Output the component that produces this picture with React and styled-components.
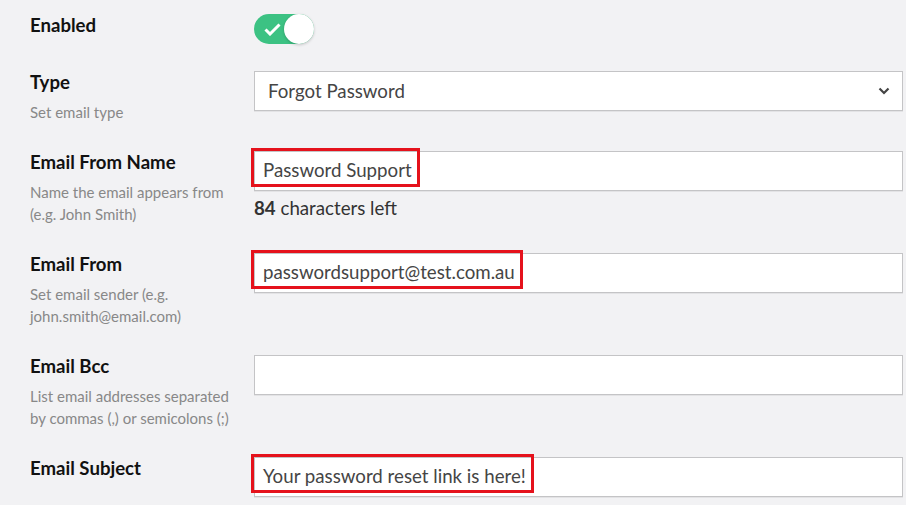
import React from 'react';
import styled, { createGlobalStyle } from 'styled-components';

const GlobalStyle = createGlobalStyle`
  html, body {
    margin: 0;
    padding: 0;
    background: #f2f2f4;
  }
  body {
    font-family: Lato, 'Open Sans', sans-serif;
  }
`;

const fields = [
  { label: 'Type', help: 'Set email type', kind: 'select', value: 'Forgot Password' },
  {
    label: 'Email From Name',
    help: 'Name the email appears from (e.g. John Smith)',
    value: 'Password Support',
    marked: true,
    counter: 84,
  },
  {
    label: 'Email From',
    help: 'Set email sender (e.g. john.smith@email.com)',
    value: 'passwordsupport@test.com.au',
    marked: true,
  },
  { label: 'Email Bcc', help: 'List email addresses separated by commas (,) or semicolons (;)', value: '' },
  { label: 'Email Subject', value: 'Your password reset link is here!', marked: true },
];

export default function App() {
  return (
    <>
      <GlobalStyle />
      <Form>
        <Row>
          <LabelCol>
            <Label>Enabled</Label>
          </LabelCol>
          <Toggle on>
            <svg width="17" height="13" viewBox="0 0 17 13">
              <polyline points="1.5,6.5 6,11 15.5,1.5" fill="none" stroke="#fff" strokeWidth="3" />
            </svg>
            <Knob />
          </Toggle>
        </Row>
        {fields.map(f => (
          <Row key={f.label}>
            <LabelCol>
              <Label>{f.label}</Label>
              {f.help && <Help>{f.help}</Help>}
            </LabelCol>
            <InputCol>
              {f.kind == 'select' ? (
                <Select>
                  <span>{f.value}</span>
                  <svg width="12" height="8" viewBox="0 0 12 8">
                    <polyline points="1.5,1.5 6,6 10.5,1.5" fill="none" stroke="#444" strokeWidth="2.2" />
                  </svg>
                </Select>
              ) : (
                <Field>{f.marked ? <Mark>{f.value}</Mark> : f.value}</Field>
              )}
              {f.counter && (
                <Counter>
                  <b>{f.counter}</b> characters left
                </Counter>
              )}
            </InputCol>
          </Row>
        ))}
      </Form>
    </>
  );
}

const Form = styled.div`
  padding: 14px 3px 0 30px;
`;

const Row = styled.div`
  display: grid;
  grid-template-columns: 224px 1fr;
  align-items: start;
  margin-bottom: 27px;
`;

const LabelCol = styled.div`
  display: flex;
  flex-direction: column;
`;

const Label = styled.div`
  font-size: 18.6px;
  line-height: 22px;
  font-weight: 700;
  color: #111;
`;

const Help = styled.div`
  margin-top: 8px;
  max-width: 208px;
  font-size: 15px;
  line-height: 22.5px;
  color: #888;
`;

const InputCol = styled.div`
  display: flex;
  flex-direction: column;
`;

const Field = styled.div`
  position: relative;
  box-sizing: border-box;
  height: 40px;
  display: flex;
  align-items: center;
  padding: 0 8px;
  background: #fff;
  border: 1px solid #c4c4c6;
  box-shadow: 0 1px 0 rgba(0, 0, 0, 0.06);
  font-size: 18.7px;
  color: #454545;
  white-space: nowrap;
`;

const Select = styled(Field)`
  justify-content: space-between;
  padding: 0 12px 0 13px;
`;

const Mark = styled.span`
  position: absolute;
  left: -4px;
  top: -4px;
  box-sizing: border-box;
  height: 39px;
  display: flex;
  align-items: center;
  padding: 5px 5px 0 9px;
  border: 3px solid #e5121c;
`;

const Counter = styled.div`
  margin-top: 6px;
  font-size: 18.7px;
  line-height: 22px;
  color: #333;
  b {
    font-weight: 700;
  }
`;

const Toggle = styled.div`
  position: relative;
  box-sizing: border-box;
  width: 60px;
  height: 30px;
  border-radius: 15px;
  background: ${({ on }) => (on ? '#3cc283' : '#ccc')};
  display: flex;
  align-items: center;
  padding-left: 10px;
  svg {
    display: block;
  }
`;

const Knob = styled.span`
  position: absolute;
  right: 0;
  top: 0;
  width: 30px;
  height: 30px;
  border-radius: 50%;
  background: #fff;
  box-shadow: 0 1px 3px rgba(0, 0, 0, 0.2);
`;
